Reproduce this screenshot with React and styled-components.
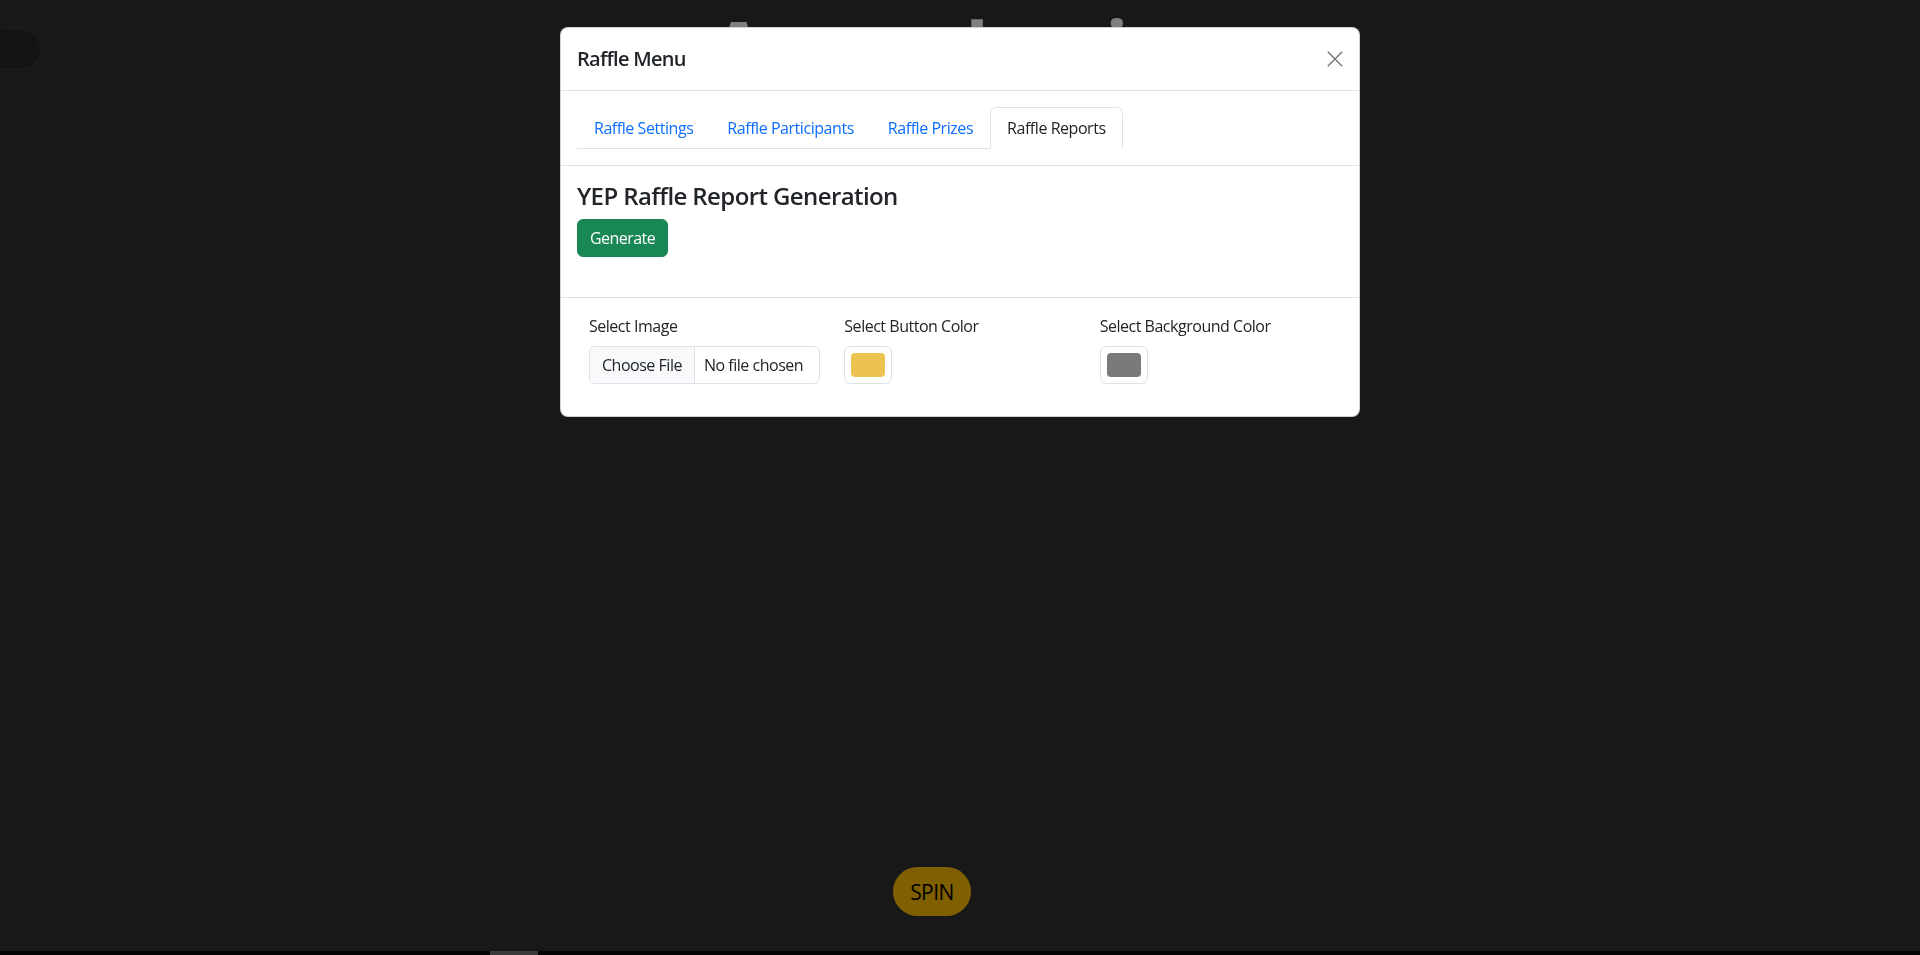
import React from 'react';
import styled, { createGlobalStyle } from 'styled-components';

const GlobalStyle = createGlobalStyle`
  html, body {
    margin: 0;
    padding: 0;
  }
  body {
    font-family: "Open Sans", "Noto Sans", "Liberation Sans", sans-serif;
    color: #212529;
    background: #303030;
    letter-spacing: -0.03em;
    overflow: hidden;
  }
  * {
    box-sizing: border-box;
  }
`;

// page behind the modal <--
const Page = styled.div`
  height: 100vh;
  display: flex;
  flex-direction: column;
  background: #303030;
`;

const TopBar = styled.div`
  display: grid;
  grid-template-columns: 1fr auto 1fr;
  align-items: start;
`;

const SidePill = styled.div`
  width: 40px;
  height: 38px;
  margin-top: 30px;
  background: #282828;
  border-radius: 0 19px 19px 0;
  box-shadow: 0 0 8px rgba(255, 255, 255, 0.06);
`;

const BigTitle = styled.h1`
  margin: 12px 0 0;
  font-size: 60px;
  line-height: 1;
  font-weight: 800;
  color: #ffffff;
  letter-spacing: 0;
`;

const Stage = styled.div`
  flex: 1;
`;

const SpinRow = styled.div`
  display: flex;
  justify-content: center;
  padding-right: 56px;
  margin-bottom: 35px;
`;

const SpinButton = styled.button`
  width: 78px;
  height: 49px;
  border: none;
  border-radius: 25px;
  background: #ffbf00;
  color: #000;
  font-family: inherit;
  font-size: 21px;
  letter-spacing: -0.025em;
  padding: 0;
`;

const ScrollTrack = styled.div`
  height: 4px;
  background: #0a0a0a;
`;

const ScrollThumb = styled.div`
  height: 100%;
  width: ${(p) => p.$size}px;
  margin-left: ${(p) => p.$offset}px;
  background: #747474;
`;
// -->

// modal <--
const Backdrop = styled.div`
  position: fixed;
  inset: 0;
  background: rgba(0, 0, 0, 0.5);
`;

const ModalLayer = styled.div`
  position: fixed;
  inset: 0;
  display: flex;
  justify-content: center;
  align-items: flex-start;
  padding-top: 27px;
`;

const Dialog = styled.div`
  width: 800px;
  background: #fff;
  border: 1px solid rgba(0, 0, 0, 0.175);
  border-radius: 8px;
`;

const Header = styled.div`
  display: flex;
  align-items: center;
  justify-content: space-between;
  padding: 16px;
  border-bottom: 1px solid #dee2e6;
`;

const ModalTitle = styled.h5`
  margin: 0;
  font-size: 20px;
  line-height: 30px;
  font-weight: 600;
  letter-spacing: -0.035em;
`;

const CloseButton = styled.button`
  width: 16px;
  height: 16px;
  padding: 0;
  border: none;
  background: transparent;
  display: flex;
  cursor: pointer;
`;

const Section = styled.div`
  padding: ${(p) => p.$pad || '16px'};
  border-bottom: ${(p) => (p.$last ? 'none' : '1px solid #dee2e6')};
`;

const TabList = styled.div`
  display: inline-flex;
  border-bottom: 1px solid #dee2e6;
`;

const Tab = styled.button`
  padding: 8px 16px;
  margin-bottom: -1px;
  font-family: inherit;
  font-size: 16px;
  line-height: 24px;
  letter-spacing: -0.028em;
  background: ${(p) => (p.$active ? '#fff' : 'transparent')};
  color: ${(p) => (p.$active ? '#212529' : '#0d6efd')};
  border: 1px solid ${(p) => (p.$active ? '#dee2e6' : 'transparent')};
  border-bottom-color: ${(p) => (p.$active ? '#fff' : 'transparent')};
  border-radius: 6px 6px 0 0;
  cursor: pointer;
`;

const ReportTitle = styled.h4`
  margin: 0 0 8px;
  font-size: 24px;
  line-height: 1.2;
  font-weight: 600;
  letter-spacing: -0.025em;
`;

const ButtonRow = styled.div`
  margin-bottom: 24px;
`;

const GenerateButton = styled.button`
  height: 38px;
  padding: 6px 12px;
  border: 1px solid #198754;
  border-radius: 6px;
  background: #198754;
  color: #fff;
  font-family: inherit;
  font-size: 16px;
  line-height: 24px;
  letter-spacing: -0.035em;
  cursor: pointer;
`;

const OptionsGrid = styled.div`
  display: grid;
  grid-template-columns: repeat(3, 1fr);
  column-gap: 24px;
`;

const Field = styled.div`
  display: flex;
  flex-direction: column;
  align-items: flex-start;
`;

const Label = styled.label`
  display: block;
  margin-bottom: 8px;
  font-size: 16px;
  line-height: 24px;
`;

const FileBox = styled.div`
  width: 100%;
  height: 38px;
  display: flex;
  border: 1px solid #dee2e6;
  border-radius: 6px;
  overflow: hidden;
  font-size: 16px;
  line-height: 24px;
`;

const FileButton = styled.span`
  display: flex;
  align-items: center;
  padding: 0 12px;
  background: #f8f9fa;
  border-right: 1px solid #dee2e6;
`;

const FileName = styled.span`
  display: flex;
  align-items: center;
  padding: 0 12px 0 9px;
`;

const ColorBox = styled.div`
  width: 48px;
  height: 38px;
  padding: 6px;
  border: 1px solid #dee2e6;
  border-radius: 6px;
  background: #fff;
`;

const Swatch = styled.div`
  width: 100%;
  height: 100%;
  border-radius: 4px;
  background: ${(p) => p.$color};
`;
// -->

const tabs = ['Raffle Settings', 'Raffle Participants', 'Raffle Prizes', 'Raffle Reports'];

const App = () => {
  return (
    <>
      <GlobalStyle />
      <Page>
        <TopBar>
          <SidePill />
          <BigTitle>Aurora drawing</BigTitle>
          <div />
        </TopBar>
        <Stage />
        <SpinRow>
          <SpinButton>SPIN</SpinButton>
        </SpinRow>
        <ScrollTrack>
          <ScrollThumb $offset={490} $size={48} />
        </ScrollTrack>
      </Page>

      <Backdrop />
      <ModalLayer>
        <Dialog>
          <Header>
            <ModalTitle>Raffle Menu</ModalTitle>
            <CloseButton aria-label="Close">
              <svg width="16" height="16" viewBox="0 0 16 16">
                <path d="M0.8 0.8 L15.2 15.2 M15.2 0.8 L0.8 15.2" stroke="#7a7a7a" strokeWidth="1.5" fill="none" />
              </svg>
            </CloseButton>
          </Header>

          <Section>
            <TabList>
              {tabs.map((t) => (
                <Tab key={t} $active={t === 'Raffle Reports'}>{t}</Tab>
              ))}
            </TabList>
          </Section>

          <Section>
            <ReportTitle>YEP Raffle Report Generation</ReportTitle>
            <ButtonRow>
              <GenerateButton>Generate</GenerateButton>
            </ButtonRow>
          </Section>

          <Section $pad="16px 28px 32px" $last>
            <OptionsGrid>
              <Field>
                <Label>Select Image</Label>
                <FileBox>
                  <FileButton>Choose File</FileButton>
                  <FileName>No file chosen</FileName>
                </FileBox>
              </Field>
              <Field>
                <Label>Select Button Color</Label>
                <ColorBox>
                  <Swatch $color="#ecc351" />
                </ColorBox>
              </Field>
              <Field>
                <Label>Select Background Color</Label>
                <ColorBox>
                  <Swatch $color="#7a7a7a" />
                </ColorBox>
              </Field>
            </OptionsGrid>
          </Section>
        </Dialog>
      </ModalLayer>
    </>
  );
};

export default App;
